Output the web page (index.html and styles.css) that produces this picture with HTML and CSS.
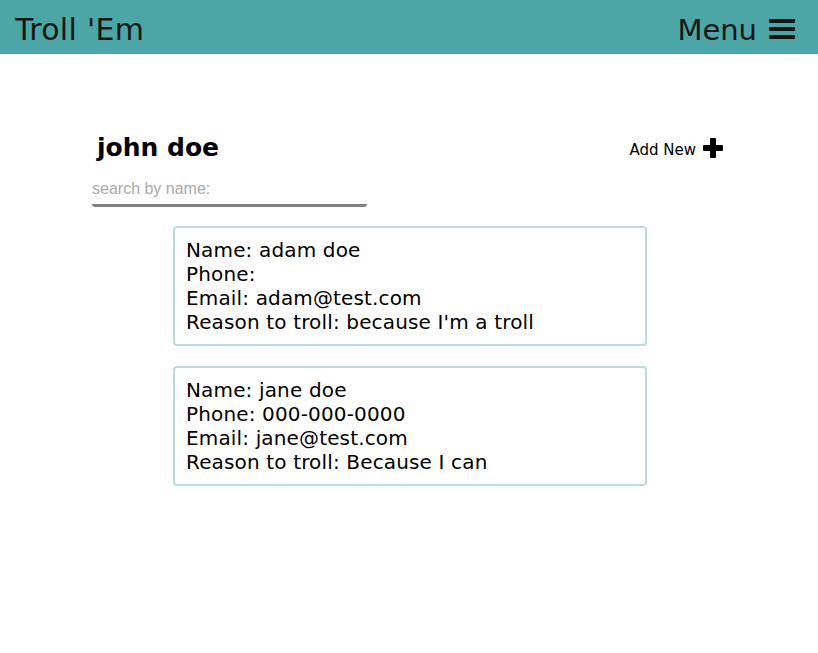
FILE: index.html
```html
<!DOCTYPE html>
<html>
<head>
<meta charset="utf-8">
<link rel="stylesheet" href="styles.css">
</head>
<body>
<header class="topbar">
  <div class="brand">Troll 'Em</div>
  <div class="menu">Menu
    <svg class="bars" width="26" height="20" viewBox="0 0 26 20"><rect x="0" y="0" width="26" height="4" rx="1"/><rect x="0" y="8" width="26" height="4" rx="1"/><rect x="0" y="16" width="26" height="4" rx="1"/></svg>
  </div>
</header>
<main class="content">
  <div class="toolbar">
    <div class="left">
      <h1 class="title">john doe</h1>
      <input class="search" type="text" placeholder="search by name:">
    </div>
    <div class="add">Add New
      <svg class="plus" width="20" height="20" viewBox="0 0 20 20"><rect x="7" y="0" width="6" height="20" rx="1"/><rect x="0" y="7" width="20" height="6" rx="1"/></svg>
    </div>
  </div>
  <div class="cards">
    <div class="card">
      <div>Name: adam doe</div>
      <div>Phone: </div>
      <div>Email: adam@test.com</div>
      <div>Reason to troll: because I'm a troll</div>
    </div>
    <div class="card">
      <div>Name: jane doe</div>
      <div>Phone: 000-000-0000</div>
      <div>Email: jane@test.com</div>
      <div>Reason to troll: Because I can</div>
    </div>
  </div>
</main>
</body>
</html>
```
FILE: styles.css
```css
body {
  margin: 0;
  font-family: Verdana, "DejaVu Sans", sans-serif;
  color: #000;
  background: #fff;
}
.topbar {
  height: 54px;
  box-sizing: border-box;
  background: #4da6a6;
  display: flex;
  align-items: center;
  justify-content: space-between;
  padding: 5px 23px 0 15px;
  color: #161616;
  font-size: 29px;
}
.brand {
  font-size: 30px;
  letter-spacing: 0.3px;
}
.menu {
  display: flex;
  align-items: center;
  gap: 12px;
}
.bars { fill: #161616; position: relative; top: -1px; }
.content {
  width: 634px;
  margin: 0 auto;
  padding-top: 78px;
}
.toolbar {
  display: flex;
  justify-content: space-between;
  align-items: flex-start;
}
.title {
  margin: 0 0 9px 5px;
  font-size: 25px;
  font-weight: bold;
  line-height: 32px;
}
.search {
  display: block;
  width: 275px;
  box-sizing: border-box;
  border: none;
  border-bottom: 3px solid #808080;
  border-radius: 0 0 3px 3px;
  padding: 0;
  height: 34px;
  font-family: "Liberation Sans", Arial, sans-serif;
  font-size: 16px;
  outline: none;
}
.search::placeholder { color: #a9a9a9; }
.add {
  display: flex;
  align-items: flex-end;
  gap: 7px;
  font-size: 15px;
  margin-top: 6px;
  margin-right: 3px;
  line-height: 16px;
}
.plus { fill: #000; }
.cards {
  display: flex;
  flex-direction: column;
  align-items: center;
  gap: 20px;
  margin-top: 19px;
  padding-left: 2px;
}
.card {
  width: 474px;
  box-sizing: border-box;
  border: 2px solid #bcdcdc;
  border-radius: 4px;
  padding: 10px 11px;
  font-size: 20px;
  line-height: 24px;
  letter-spacing: 0.15px;
}
```
